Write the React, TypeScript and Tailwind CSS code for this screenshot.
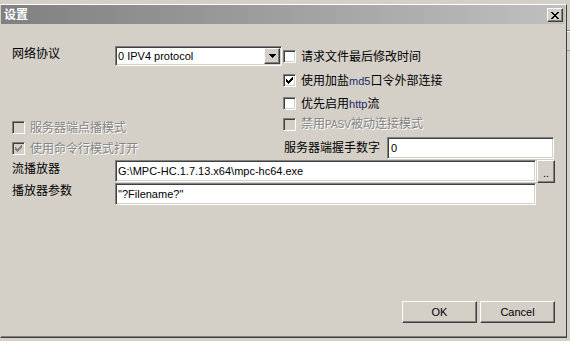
import React from "react";

const sunken =
  "border border-t-[#808080] border-l-[#808080] border-b-white border-r-white shadow-[inset_1px_1px_0_#404040,inset_-1px_-1px_0_#d4d0c8]";
const raised =
  "border border-t-white border-l-white border-b-[#404040] border-r-[#404040] shadow-[inset_-1px_-1px_0_#808080]";

function CheckMark({ color }: { color: string }) {
  const px: [number, number][] = [
    [6, 0],
    [5, 1], [6, 1],
    [0, 2], [4, 2], [5, 2], [6, 2],
    [0, 3], [1, 3], [3, 3], [4, 3], [5, 3],
    [0, 4], [1, 4], [2, 4], [3, 4], [4, 4],
    [1, 5], [2, 5], [3, 5],
    [2, 6],
  ];
  return (
    <svg width="7" height="7" viewBox="0 0 7 7" shapeRendering="crispEdges">
      {px.map(([x, y], i) => (
        <rect key={i} x={x} y={y} width="1" height="1" fill={color} />
      ))}
    </svg>
  );
}

function Check({ checked, disabled }: { checked?: boolean; disabled?: boolean }) {
  return (
    <span
      className={
        disabled
          ? `w-[13px] h-[13px] shrink-0 flex items-center justify-center bg-[#d4d0c8] ${sunken}`
          : `w-[13px] h-[13px] shrink-0 flex items-center justify-center bg-white ${sunken}`
      }
    >
      {checked && <CheckMark color={disabled ? "#808080" : "#000000"} />}
    </span>
  );
}

function CheckRow({
  checked,
  disabled,
  children,
  className,
}: {
  checked?: boolean;
  disabled?: boolean;
  children: React.ReactNode;
  className?: string;
}) {
  return (
    <div className={`flex items-center h-[13px] gap-[5px] ${className ?? ""}`}>
      <Check checked={checked} disabled={disabled} />
      <span
        className={
          disabled
            ? "text-[#858585] [text-shadow:1px_1px_0_#ffffff] whitespace-nowrap"
            : "text-black whitespace-nowrap"
        }
      >
        {children}
      </span>
    </div>
  );
}

function CloseX() {
  const rows = ["11....11", ".11..11.", "..1111..", "...11...", "..1111..", ".11..11.", "11....11"];
  return (
    <svg width="8" height="7" viewBox="0 0 8 7" shapeRendering="crispEdges">
      {rows.flatMap((r, y) =>
        r.split("").map((c, x) =>
          c === "1" ? <rect key={`${x}-${y}`} x={x} y={y} width="1" height="1" fill="#000" /> : null
        )
      )}
    </svg>
  );
}

export default function App() {
  return (
    <div className="w-[570px] h-[341px] bg-[#d4d0c8] flex overflow-hidden text-[12px] leading-[14px] text-black font-['Liberation_Sans','Noto_Sans_CJK_SC',sans-serif]">
      <div className="w-[567px] h-[341px] flex flex-col pt-[4px]">
        <div className="w-[567px] h-[334px] flex flex-col border-t border-t-white border-l border-l-[#d4d0c8] border-r border-r-[#404040] border-b border-b-[#404040] pr-[1px] shadow-[inset_0_-1px_0_#808080]">
          {/* title bar */}
          <div className="h-[19px] flex items-start justify-between bg-gradient-to-r from-[#808080] to-[#c0c0c0] pl-[3px] pr-[2px]">
            <span className="text-white font-bold text-[12px] leading-[14px] mt-[3px]">设置</span>
            <div className={`w-[16px] h-[14px] mt-[3px] bg-[#d4d0c8] flex items-center justify-center ${raised}`}>
              <CloseX />
            </div>
          </div>

          {/* body */}
          <div className="flex flex-col pl-[11px]">
            {/* row 1 */}
            <div className="flex mt-[22px] h-[64px]">
              <div className="w-[271px] flex items-start">
                <span className="w-[103px] mt-[1px]">网络协议</span>
                <div className={`w-[167px] h-[20px] bg-white flex items-center ${sunken}`}>
                  <span className="flex-1 pl-[2px] text-[11px] leading-[13px]">0 IPV4 protocol</span>
                  <div className={`w-[16px] h-[16px] mr-[1px] bg-[#d4d0c8] flex items-center justify-center ${raised}`}>
                    <svg width="7" height="4" viewBox="0 0 7 4" shapeRendering="crispEdges">
                      <path d="M0 0h7v1H0zM1 1h5v1H1zM2 2h3v1H2zM3 3h1v1H3z" fill="#000" />
                    </svg>
                  </div>
                </div>
              </div>
              <div className="flex flex-col pt-[4px]">
                <CheckRow className="mb-[11px]">请求文件最后修改时间</CheckRow>
                <CheckRow checked className="mb-[10px]">
                  使用加盐<span className="text-[11px] text-[#1c2a6b]">md5</span>口令外部连接
                </CheckRow>
                <CheckRow>
                  优先启用<span className="text-[11px] text-[#1c2a6b]">http</span>流
                </CheckRow>
              </div>
            </div>

            {/* row 2 */}
            <div className="flex mt-[8px] h-[42px]">
              <div className="w-[271px] flex flex-col pt-[3px]">
                <CheckRow disabled className="mb-[8px]">服务器端点播模式</CheckRow>
                <CheckRow checked disabled>使用命令行模式打开</CheckRow>
              </div>
              <div className="flex flex-col">
                <CheckRow disabled>
                  禁用<span className="text-[10px]">PASV</span>被动连接模式
                </CheckRow>
                <div className="flex items-center mt-[6px]">
                  <span className="w-[104px] pl-[1px] whitespace-nowrap">服务器端握手数字</span>
                  <div className={`w-[167px] h-[22px] bg-white flex items-center pl-[3px] text-[11px] ${sunken}`}>0</div>
                </div>
              </div>
            </div>

            {/* row 3 */}
            <div className="flex h-[23px] items-start">
              <span className="w-[103px] mt-[2px]">流播放器</span>
              <div className={`w-[421px] h-[22px] bg-white flex items-center pl-[2px] text-[11px] whitespace-nowrap ${sunken}`}>
                G:\MPC-HC.1.7.13.x64\mpc-hc64.exe
              </div>
              <div className={`w-[18px] h-[23px] ml-[1px] bg-[#d4d0c8] flex items-end justify-center pb-[3px] text-[11px] leading-[11px] ${raised}`}>
                ..
              </div>
            </div>

            {/* row 4 */}
            <div className="flex h-[22px] items-start">
              <span className="w-[103px] mt-[1px]">播放器参数</span>
              <div className={`w-[421px] h-[22px] bg-white flex items-center pl-[2px] text-[11px] ${sunken}`}>
                "?Filename?"
              </div>
            </div>

            {/* buttons */}
            <div className="flex mt-[96px] pl-[390px] gap-[3px]">
              <div className={`w-[75px] h-[22px] bg-[#d4d0c8] flex items-center justify-center text-[11px] ${raised}`}>OK</div>
              <div className={`w-[75px] h-[22px] bg-[#d4d0c8] flex items-center justify-center text-[11px] ${raised}`}>Cancel</div>
            </div>
          </div>
        </div>
      </div>
      {/* background window strip */}
      <div className="w-[3px] h-[341px] flex flex-col bg-[#d4d0c8]">
        <div className="h-[30px]" />
        <div className="h-[1px] bg-[#808080]" />
        <div className="h-[1px] bg-white" />
        <div className="h-[18px]" />
        <div className="h-[1px] bg-[#a0a0a0]" />
      </div>
    </div>
  );
}
